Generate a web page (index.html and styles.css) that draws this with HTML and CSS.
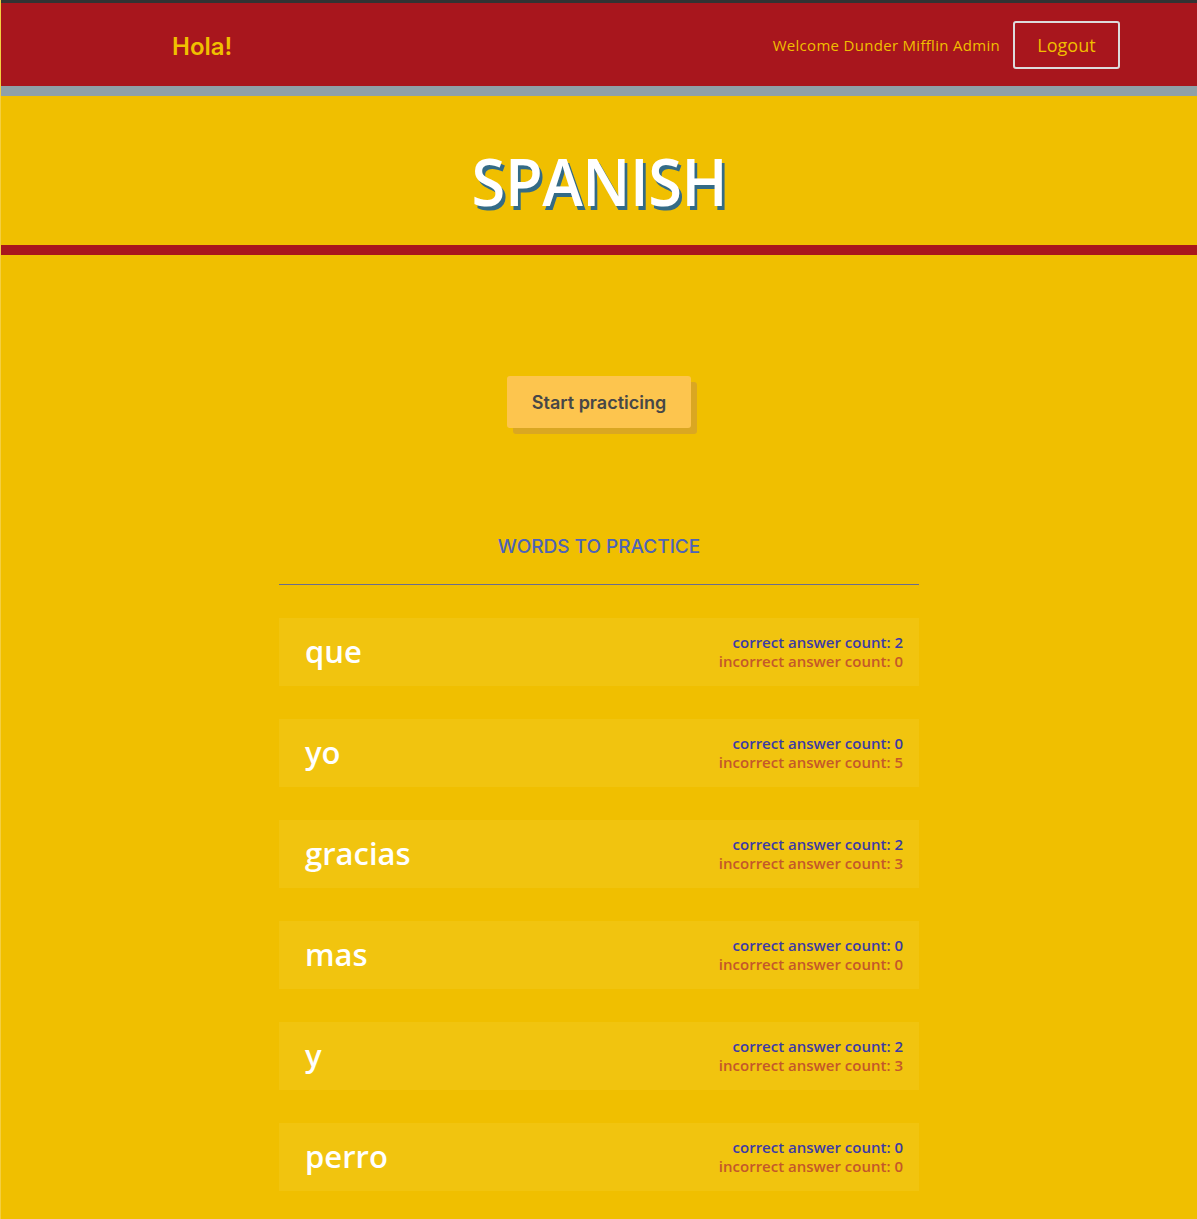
FILE: index.html
```html
<!DOCTYPE html>
<html>
<head>
<meta charset="utf-8">
<link rel="stylesheet" href="styles.css">
</head>
<body>
<div class="page">
  <header class="topbar">
    <div class="brand">Hola!</div>
    <div class="user">
      <span class="welcome">Welcome Dunder Mifflin Admin</span>
      <button class="logout">Logout</button>
    </div>
  </header>
  <div class="hero">
    <h1 class="title">SPANISH</h1>
  </div>
  <main class="main">
    <div class="start-wrap"><button class="start">Start practicing</button></div>
    <h2 class="words-heading">WORDS TO PRACTICE</h2>
    <div class="rule"></div>
    <ul class="words">
      <li class="word-card"><span class="word">que</span><div class="stats"><div class="correct">correct answer count: 2</div><div class="incorrect">incorrect answer count: 0</div></div></li>
      <li class="word-card"><span class="word">yo</span><div class="stats"><div class="correct">correct answer count: 0</div><div class="incorrect">incorrect answer count: 5</div></div></li>
      <li class="word-card"><span class="word">gracias</span><div class="stats"><div class="correct">correct answer count: 2</div><div class="incorrect">incorrect answer count: 3</div></div></li>
      <li class="word-card"><span class="word">mas</span><div class="stats"><div class="correct">correct answer count: 0</div><div class="incorrect">incorrect answer count: 0</div></div></li>
      <li class="word-card"><span class="word">y</span><div class="stats"><div class="correct">correct answer count: 2</div><div class="incorrect">incorrect answer count: 3</div></div></li>
      <li class="word-card"><span class="word">perro</span><div class="stats"><div class="correct">correct answer count: 0</div><div class="incorrect">incorrect answer count: 0</div></div></li>
    </ul>
  </main>
</div>
</body>
</html>
```
FILE: styles.css
```css
* { box-sizing: border-box; }
html, body { margin: 0; padding: 0; }
body {
  background: #f0bf00;
  font-family: "Open Sans", "Noto Sans", sans-serif;
}
.page {
  border-left: 1px solid rgba(255,255,255,0.25);
  min-height: 1219px;
}
.topbar {
  height: 96px;
  background: #a8161d;
  border-top: 3px solid #333333;
  border-bottom: 10px solid #8fa0a8;
  display: flex;
  align-items: center;
  justify-content: space-between;
  padding: 1px 77px 0 171px;
}
.brand {
  color: #f0bf00;
  font-family: "Inter", sans-serif;
  font-weight: 600;
  font-size: 24px;
  padding-top: 2px;
}
.user { display: flex; align-items: center; gap: 13px; }
.welcome {
  color: #f0bf00;
  font-size: 15px;
  letter-spacing: 0.3px;
}
.logout {
  width: 107px;
  height: 48px;
  background: transparent;
  border: 2px solid #dcdcdc;
  border-radius: 3px;
  color: #f0bf00;
  font-family: "Open Sans", sans-serif;
  font-size: 18px;
}
.hero {
  height: 159px;
  border-bottom: 10px solid #a8161d;
  display: flex;
  align-items: center;
  justify-content: center;
  padding-top: 22px;
}
.title {
  margin: 0;
  color: #ffffff;
  font-family: "Open Sans", sans-serif;
  font-weight: 600;
  font-size: 66px;
  letter-spacing: -0.5px;
  transform: scaleX(0.93);
  text-shadow: 3px 4px 0 #346b86;
  line-height: 1;
  padding-bottom: 4px;
}
.main {
  width: 640px;
  margin: 0 auto;
  padding-top: 121px;
}
.start-wrap { display: flex; justify-content: center; }
.start {
  width: 184px;
  height: 52px;
  background: #fdc54e;
  border: none;
  border-radius: 3px;
  box-shadow: 6px 6px 0 #daa722;
  color: #474747;
  font-family: "Inter", sans-serif;
  font-weight: 600;
  font-size: 18px;
}
.words-heading {
  margin: 107px 0 0;
  text-align: center;
  color: #4d63b8;
  font-family: "Inter", sans-serif;
  font-weight: 500;
  font-size: 19px;
  line-height: 24px;
}
.rule {
  margin-top: 25px;
  height: 1px;
  background: #6a6c8e;
}
.words {
  list-style: none;
  margin: 33px 0 0;
  padding: 0;
  display: flex;
  flex-direction: column;
  gap: 33px;
}
.word-card {
  height: 68px;
  background: #f1c40f;
  display: flex;
  align-items: center;
  justify-content: space-between;
  padding: 0 16px 0 26px;
}
.word {
  color: #ffffff;
  font-family: "Open Sans", sans-serif;
  font-weight: 600;
  font-size: 31px;
  padding-bottom: 2px;
}
.stats {
  text-align: right;
  font-size: 15px;
  line-height: 19px;
  font-weight: 600;
}
.correct { color: #3c3aa6; }
.incorrect { color: #c4582a; }
```
